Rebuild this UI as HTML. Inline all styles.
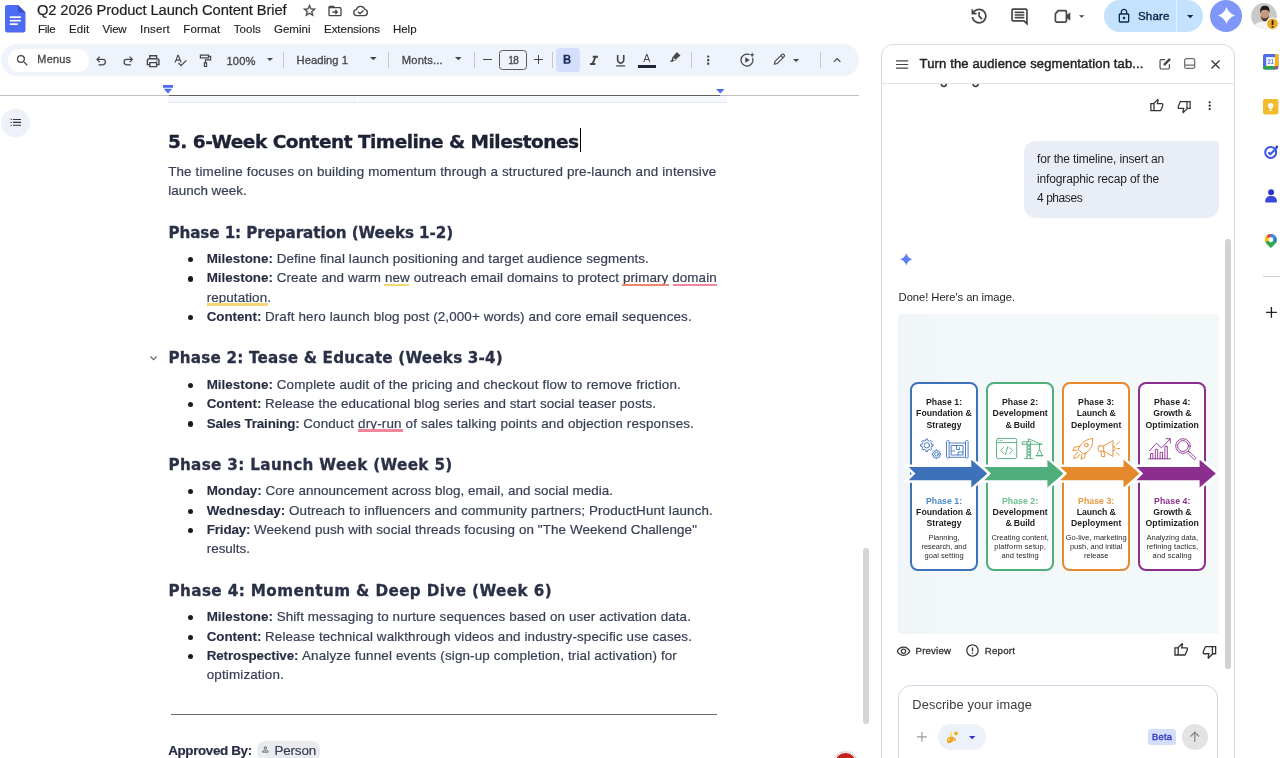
<!DOCTYPE html>
<html lang="en"><head><meta charset="utf-8"><title>Q2 2026 Product Launch Content Brief</title>
<style>
*{box-sizing:border-box;margin:0;padding:0}
html,body{width:1280px;height:758px;overflow:hidden;background:#fff}
body{position:relative;font-family:"Liberation Sans",sans-serif;color:#1f1f1f}
.a{position:absolute;white-space:nowrap}
.t{position:absolute;white-space:nowrap;line-height:1}
svg{position:absolute;overflow:visible}
.ic{fill:#444746}
.st{fill:none;stroke:#444746;stroke-width:1.6;stroke-linecap:round;stroke-linejoin:round}
.menu{font-size:11.5px;color:#1f1f1f;top:23.5px;-webkit-text-stroke:0.15px #1f1f1f}
.sep{position:absolute;width:1px;height:16px;top:52px;background:#c7c7c7}
.tb{font-size:11.2px;color:#444746;top:54.5px;-webkit-text-stroke:0.3px #444746}
.h1{font-family:"DejaVu Sans","Liberation Sans",sans-serif;font-weight:700;font-size:18.5px;color:#1d2235;left:168px;-webkit-text-stroke:0.35px #1d2235}
.h2{font-family:"DejaVu Sans","Liberation Sans",sans-serif;font-weight:700;font-size:15.2px;color:#2a3147;left:168px;-webkit-text-stroke:0.3px #2a3147}
.p{font-size:13.4px;color:#363e54;left:168px;-webkit-text-stroke:0.2px #363e54}
.li{font-size:13.4px;color:#363e54;left:206.5px;-webkit-text-stroke:0.2px #363e54}
.li b{color:#262d42;-webkit-text-stroke:0.1px #262d42}
.dot{position:absolute;left:188.1px;width:5.4px;height:5.4px;border-radius:50%;background:#1a1a1a}
.ul{position:absolute;height:2.4px}
#root{position:absolute;left:0;top:0;width:1280px;height:758px;overflow:hidden;will-change:transform}
</style></head><body><div id="root">
<!-- docs logo -->
<svg style="left:5px;top:4.5px" width="20.5" height="27.5" viewBox="0 0 20.5 27.5">
 <path d="M2.2 0H13l7.5 7.5V25.3a2.2 2.2 0 0 1-2.2 2.2H2.2A2.2 2.2 0 0 1 0 25.3V2.2A2.2 2.2 0 0 1 2.2 0z" fill="#4d6bf3"></path>
 <path d="M13 0l7.5 7.5H14.6A1.6 1.6 0 0 1 13 5.9z" fill="#3550c8"></path>
 <rect x="4.8" y="11.3" width="11" height="1.7" fill="#fff"></rect><rect x="4.8" y="14.8" width="11" height="1.7" fill="#fff"></rect><rect x="4.8" y="18.3" width="8" height="1.7" fill="#fff"></rect>
</svg>
<div class="t" style="left: 37px; font-size: 14.7px; color: rgb(31, 31, 31); -webkit-text-stroke: 0.2px rgb(31, 31, 31); letter-spacing: -0.101px; top: 2.9px;">Q2 2026 Product Launch Content Brief</div>
<!-- star -->
<svg style="left:301.7px;top:3.1px" width="15" height="15" viewBox="0 0 24 24"><path class="ic" style="stroke:#444746;stroke-width:.6" d="M22 9.24l-7.19-.62L12 2 9.19 8.63 2 9.24l5.46 4.73L5.82 21 12 17.27 18.18 21l-1.63-7.03L22 9.24zM12 15.4l-3.76 2.27 1-4.28-3.32-2.88 4.38-.38L12 6.1l1.71 4.04 4.38.38-3.32 2.88 1 4.28L12 15.4z"></path></svg>
<!-- move folder -->
<svg style="left:326.5px;top:2.5px" width="16" height="16" viewBox="0 0 24 24"><path class="st" style="stroke-width:2" d="M3 6.5A1.5 1.5 0 0 1 4.5 5H9.5L11.5 7H19.5A1.5 1.5 0 0 1 21 8.5V17.5A1.5 1.5 0 0 1 19.500 19H4.5A1.500 1.500 0 0 1 3 17.5Z M9 13.500H15.500 M13 11L15.500 13.500L13 16"></path><path class="ic" d="M3 6.500A1.500 1.500 0 0 1 4.500 5H9.500L11.800 8H3z"></path></svg>
<!-- cloud done -->
<svg style="left:352px;top:2.5px" width="17" height="16" viewBox="0 0 25.500 24"><path class="st" style="stroke-width:2" d="M7 19A4.500 4.500 0 0 1 6.500 10.050A6.500 6.500 0 0 1 19 9.500A4.800 4.800 0 0 1 19 19Z M9.500 13.500L12 16L16.500 11.500"></path></svg>
<div class="t menu" style="left: 38px; letter-spacing: -0.258px; top: 23.7px;">File</div>
<div class="t menu" style="left: 69px; letter-spacing: 0.118px; top: 23.7px;">Edit</div>
<div class="t menu" style="left: 102.5px; letter-spacing: -0.18px; top: 23.7px;">View</div>
<div class="t menu" style="left: 140px; letter-spacing: 0.206px; top: 23.7px;">Insert</div>
<div class="t menu" style="left: 183.3px; letter-spacing: 0.096px; top: 23.7px;">Format</div>
<div class="t menu" style="left: 233.8px; letter-spacing: 0.028px; top: 23.7px;">Tools</div>
<div class="t menu" style="left: 274px; letter-spacing: 0.01px; top: 23.7px;">Gemini</div>
<div class="t menu" style="left: 324px; letter-spacing: -0.027px; top: 23.7px;">Extensions</div>
<div class="t menu" style="left: 393px; letter-spacing: -0.039px; top: 23.7px;">Help</div>
<!-- history -->
<svg style="left:968.900px;top:5.600px" width="20.200" height="20.200" viewBox="0 0 24 24"><path class="ic" d="M12 21q-3.450 0-6.012-2.287Q3.425 16.425 3.050 13H5.100q.350 2.600 2.313 4.300Q9.375 19 12 19q2.925 0 4.963-2.037Q19 14.925 19 12t-2.037-4.963Q14.925 5 12 5q-1.725 0-3.225.800T6.250 8H9v2H3V4h2v2.350q1.275-1.600 3.113-2.475Q9.950 3 12 3q1.875 0 3.513.712 1.637.713 2.850 1.926 1.212 1.212 1.925 2.850Q21 10.125 21 12t-.712 3.513q-.713 1.637-1.925 2.850-1.213 1.212-2.850 1.925Q13.875 21 12 21Zm2.800-4.800L11 12.400V7h2v4.600l3.200 3.200Z"></path></svg>
<!-- comment -->
<svg style="left:1008.700px;top:5.700px" width="21" height="21" viewBox="0 0 24 24"><path class="st" style="stroke-width:1.900;stroke-linejoin:miter" d="M3.500 4.500A1 1 0 0 1 4.500 3.500H19.500A1 1 0 0 1 20.500 4.500V20.300L17.200 17H4.500A1 1 0 0 1 3.500 16Z"></path><path class="st" style="stroke-width:1.900;stroke-linecap:butt" d="M6.500 7.300H17.500M6.500 10.300H17.500M6.500 13.300H17.500"></path></svg>
<!-- videocam -->
<svg style="left:1052.400px;top:6.100px" width="20.400" height="20.400" viewBox="0 0 24 24"><path class="st" style="stroke-width:2" d="M7.300 5.500h8.200a1.500 1.500 0 0 1 1.500 1.500v10.500a1.500 1.500 0 0 1-1.500 1.500h-10a1.500 1.500 0 0 1-1.500-1.500V9.300z"></path><path class="ic" d="M17 10.800l4.500-3.500v10l-4.500-3.500z"></path></svg>
<svg style="left:1079.300px;top:14.500px" width="5.400" height="3" viewBox="0 0 10 5"><path class="ic" d="M0 0h10L5 5z"></path></svg>
<!-- share -->
<div class="a" style="left:1104px;top:0;width:98.500px;height:32px;border-radius:16px;background:#c4e2fd"></div>
<div class="a" style="left:1176px;top:0;width:1px;height:32px;background:#e9f3ff"></div>
<svg style="left:1116px;top:7.500px" width="16" height="16" viewBox="0 0 24 24"><path fill="#0b2b4a" d="M18 8h-1V6c0-2.760-2.240-5-5-5S7 3.240 7 6v2H6c-1.100 0-2 .900-2 2v10c0 1.100.900 2 2 2h12c1.100 0 2-.900 2-2V10c0-1.100-.900-2-2-2zM9 6c0-1.660 1.340-3 3-3s3 1.340 3 3v2H9V6zm9 14H6V10h12v10zm-6-3c1.100 0 2-.900 2-2s-.900-2-2-2-2 .900-2 2 .900 2 2 2z"></path></svg>
<div class="t" style="left: 1138px; font-size: 11.6px; -webkit-text-stroke: 0.4px rgb(11, 43, 74); color: rgb(11, 43, 74); letter-spacing: 0.113px; top: 10px;">Share</div>
<svg style="left:1186.800px;top:14.700px" width="6.400" height="3.400" viewBox="0 0 10 5"><path fill="#0b2b4a" d="M0 0h10L5 5z"></path></svg>
<!-- gemini -->
<div class="a" style="left:1210px;top:-0.200px;width:32px;height:32px;border-radius:50%;background:#7f97f9"></div>
<svg style="left:1217.500px;top:7.200px" width="17" height="17" viewBox="0 0 24 24"><path fill="#fff" d="M12 0C13.800 5.800 18.200 10.200 24 12C18.200 13.800 13.800 18.200 12 24C10.200 18.200 5.800 13.800 0 12C5.800 10.200 10.200 5.800 12 0Z"></path></svg>
<!-- avatar -->
<svg style="left:1251px;top:2.700px" width="28" height="28" viewBox="0 0 28 28">
 <defs><clipPath id="avc"><circle cx="13" cy="13" r="12.900"></circle></clipPath></defs>
 <g clip-path="url(#avc)"><rect width="26" height="26" fill="#c9c9c9"></rect>
 <path d="M2 27C3 20.500 7 18.500 13.500 18.500S23 20.500 24.500 27Z" fill="#f4f4f2"></path>
 <ellipse cx="13.800" cy="11.500" rx="4.300" ry="5.600" fill="#c79a7d"></ellipse>
 <path d="M9.300 10.500C8.500 4.500 11 2.800 14 2.800S19.200 4.500 18.300 10.200C17.800 7.800 16.500 6.800 13.800 6.800S10 7.800 9.300 10.500Z" fill="#1f1a18"></path>
 <path d="M9.800 12.500C10 16.500 12 18.300 13.800 18.300S17.700 16.500 17.900 12.500C17 15 15.500 15.300 13.800 15.300S10.600 15 9.800 12.500Z" fill="#4a3a32"></path>
 </g>
 <circle cx="21.500" cy="20.800" r="6.300" fill="#fff"></circle><circle cx="21.500" cy="20.800" r="5.400" fill="#e9a924"></circle>
 <rect x="20.700" y="17.200" width="1.700" height="4.800" fill="#2a2010"></rect><rect x="20.700" y="23" width="1.700" height="1.500" fill="#2a2010"></rect>
</svg>

<div class="a" style="left:1px;top:44.200px;width:858.200px;height:31.400px;border-radius:15.700px;background:#eff3fb"></div>
<div class="a" style="left:8px;top:49px;width:80.500px;height:22.500px;border-radius:11.250px;background:#fff"></div>
<svg style="left:14.500px;top:52.500px" width="15" height="15" viewBox="0 0 24 24"><path class="ic" d="M15.500 14h-.790l-.280-.270A6.471 6.471 0 0 0 16 9.500 6.500 6.500 0 1 0 9.500 16c1.610 0 3.090-.590 4.230-1.570l.270.280v.790l5 4.990L20.490 19l-4.990-5zm-6 0C7.010 14 5 11.990 5 9.500S7.010 5 9.500 5 14 7.010 14 9.500 11.990 14 9.500 14z"></path></svg>
<div class="t tb" style="left: 37.3px; font-size: 10.9px; letter-spacing: 0.259px; top: 53.7px;">Menus</div>
<!-- undo / redo -->
<svg style="left:94.300px;top:54.300px" width="14.400" height="14.400" viewBox="0 0 24 24"><path class="st" style="stroke-width:2;stroke-linecap:butt;stroke-linejoin:miter" d="M9.500 4.500L5 9l4.500 4.500M5.500 9h9a4.500 4.500 0 0 1 0 9H7.500"></path></svg>
<svg style="left:120.800px;top:54.300px" width="14.400" height="14.400" viewBox="0 0 24 24"><path class="st" style="stroke-width:2;stroke-linecap:butt;stroke-linejoin:miter" d="M14.500 4.500L19 9l-4.500 4.500M18.500 9h-9a4.500 4.500 0 0 0 0 9H16.500"></path></svg>
<!-- print -->
<svg style="left:145.400px;top:52.600px" width="16.400" height="16.400" viewBox="0 0 24 24"><path class="st" style="stroke-width:2;stroke-linejoin:miter" d="M7 8V4h10v4M7 17H3.500v-5.500a3 3 0 0 1 3-3h11a3 3 0 0 1 3 3V17H17M7 14h10v6H7z"></path><circle cx="17.500" cy="11.700" r="1" class="ic"></circle></svg>
<!-- spellcheck -->
<svg style="left:172.500px;top:52.500px" width="14.400" height="14.400" viewBox="0 0 24 24"><path class="ic" d="M12.450 16h2.090L9.430 3H7.570L2.460 16h2.090l1.120-3h5.640l1.140 3zm-6.020-5L8.500 5.480 10.570 11H6.430zm15.160.59l-8.090 8.090L9.830 16l-1.410 1.410 5.090 5.090L23 13l-1.410-1.410z"></path></svg>
<!-- paint -->
<svg style="left:197.600px;top:52.800px" width="14.400" height="14.400" viewBox="0 0 24 24"><path class="st" style="stroke-width:2;stroke-linejoin:miter;stroke-linecap:butt" d="M4 3.500h13.500v4.500H4zM17.500 5.500H21V11.500H12.500V16M10.700 16.500h3.600v6h-3.600z"></path></svg>
<div class="t tb" style="left: 226.6px; letter-spacing: 0.044px; top: 55.5px;">100%</div>
<svg style="left:266.500px;top:58.400px" width="6" height="3.200" viewBox="0 0 10 5"><path class="ic" d="M0 0h10L5 5z"></path></svg>
<div class="sep" style="left:283px"></div>
<div class="t tb" style="left: 296.5px; letter-spacing: 0.054px; top: 54.7px;">Heading 1</div>
<svg style="left:370.300px;top:57.400px" width="6.600" height="3.300" viewBox="0 0 10 5"><path class="ic" d="M0 0h10L5 5z"></path></svg>
<div class="sep" style="left:388px"></div>
<div class="t tb" style="left: 401.8px; letter-spacing: 0.15px; top: 54.7px;">Monts...</div>
<svg style="left:455px;top:57.400px" width="6.600" height="3.300" viewBox="0 0 10 5"><path class="ic" d="M0 0h10L5 5z"></path></svg>
<div class="sep" style="left:474px"></div>
<div class="a" style="left:482.800px;top:59px;width:8.800px;height:1.100px;background:#444746"></div>
<div class="a" style="left:499px;top:50.100px;width:27.600px;height:19.600px;border:1px solid #5a5d5c;border-radius:3.500px"></div>
<div class="t tb" style="left: 508.3px; font-size: 10px; letter-spacing: -0.662px; top: 55.6px;">18</div>
<div class="a" style="left:534.400px;top:59px;width:8.600px;height:1.100px;background:#444746"></div>
<div class="a" style="left:538.150px;top:55.250px;width:1.100px;height:8.600px;background:#444746"></div>
<div class="sep" style="left:552px"></div>
<div class="a" style="left:556.200px;top:48px;width:23.800px;height:23.700px;border-radius:3.500px;background:#d4e0fb"></div>
<svg style="left:559.450px;top:52.400px" width="15.800" height="15.800" viewBox="0 0 24 24"><path fill="#1b2a5c" d="M15.600 10.790c.970-.670 1.650-1.770 1.650-2.790 0-2.260-1.750-4-4-4H7v14h7.040c2.090 0 3.710-1.700 3.710-3.790 0-1.520-.860-2.820-2.150-3.420zM10 6.500h3c.830 0 1.500.670 1.500 1.500s-.670 1.500-1.500 1.500h-3v-3zm3.500 9H10v-3h3.500c.830 0 1.500.670 1.500 1.500s-.670 1.500-1.500 1.500z"></path></svg>
<svg style="left:586px;top:52.600px" width="16" height="16" viewBox="0 0 24 24"><path class="ic" d="M10 4v3h2.210l-3.420 8H6v3h8v-3h-2.210l3.420-8H18V4z"></path></svg>
<svg style="left:612.800px;top:52.900px" width="15.400" height="15.400" viewBox="0 0 24 24"><path class="ic" d="M12 17c3.310 0 6-2.690 6-6V3h-2.500v8c0 1.930-1.570 3.500-3.500 3.500S8.500 12.930 8.500 11V3H6v8c0 3.310 2.690 6 6 6zm-7 2v2h14v-2H5z"></path></svg>
<div class="t" style="left: 643.2px; font-size: 10.6px; color: rgb(68, 71, 70); top: 53.1px;">A</div>
<div class="a" style="left:638px;top:65px;width:18px;height:2.800px;background:#1f2438"></div>
<!-- highlighter -->
<svg style="left:667.800px;top:50.400px" width="14.400" height="14.400" viewBox="0 0 24 24"><path class="ic" d="M14.800 3.200l6 6-8.600 8.600-3.200.6-1 1H3l3.200-3.200.6-3.200zM9 13.500l-.4 2 1.900 1.900 2-.4 6-6-3.500-3.500z"></path><path class="ic" d="M8.800 12.600l6.200-6.200 3.600 3.600-6.200 6.200z"></path></svg>
<div class="sep" style="left:691.200px"></div>
<svg style="left:700.500px;top:53px" width="14.400" height="14.400" viewBox="0 0 24 24"><path class="ic" d="M12 8c1.100 0 2-.9 2-2s-.9-2-2-2-2 .9-2 2 .9 2 2 2zm0 2c-1.100 0-2 .9-2 2s.9 2 2 2 2-.9 2-2-.9-2-2-2zm0 6c-1.100 0-2 .9-2 2s.9 2 2 2 2-.9 2-2-.9-2-2-2z"></path></svg>
<!-- circle play + sparkle -->
<svg style="left:738.500px;top:51.500px" width="16" height="16" viewBox="0 0 24 24"><path class="st" style="stroke-width:1.900" d="M15 3.600A9 9 0 1 0 20.600 9.500"></path><path class="ic" d="M9.500 8v8l6.500-4z"></path><path class="ic" d="M19.700 0l1.100 3.200 3.200 1.100-3.200 1.100-1.100 3.200-1.100-3.200-3.200-1.100 3.200-1.100z"></path></svg>
<!-- pencil -->
<svg style="left:772.400px;top:52.300px" width="14.400" height="14.400" viewBox="0 0 24 24"><path class="st" style="stroke-width:1.900" d="M4 20.500l1-4.800L16.700 4a1.900 1.900 0 0 1 2.700 0l.9.900a1.900 1.900 0 0 1 0 2.700L8.600 19.300zM14.800 6l3.500 3.500"></path></svg>
<svg style="left:792.800px;top:58.900px" width="6.200" height="3.100" viewBox="0 0 10 5"><path class="ic" d="M0 0h10L5 5z"></path></svg>
<div class="sep" style="left:820.200px"></div>
<svg style="left:829.700px;top:53.400px" width="14.400" height="14.400" viewBox="0 0 24 24"><path class="ic" d="M12 8l-6 6 1.410 1.410L12 10.830l4.590 4.580L18 14z"></path></svg>

<div class="a" style="left:0;top:95px;width:859px;height:1px;background:#bdbdbd"></div>
<div class="a" style="left:168.500px;top:94.800px;width:551.500px;height:1.300px;background:#5f6060"></div>
<svg style="left:163px;top:85px" width="10" height="9" viewBox="0 0 10 9"><path fill="#4f6bf0" d="M0 0h10v2.700H0zM0.800 3.800h8.400L5 8.400z"></path></svg>
<svg style="left:716px;top:89px" width="9" height="5" viewBox="0 0 9 5"><path fill="#4f6bf0" d="M0 0h8.600L4.300 4.400z"></path></svg>
<div class="a" style="left:168px;top:96.300px;width:559px;height:6.500px;background:#f7f9fc;border-bottom:1px solid #e1e6f2"></div>
<div class="a" style="left:354px;top:96.300px;width:1px;height:6px;background:#eceff7"></div>
<div class="a" style="left:1.300px;top:108.700px;width:28.800px;height:28.800px;border-radius:50%;background:#eef1f9"></div>
<svg style="left:9.200px;top:116.200px" width="12.800" height="12.800" viewBox="0 0 24 24"><path fill="#333" d="M4 10.800c-.700 0-1.200.500-1.200 1.200s.500 1.200 1.200 1.200 1.200-.500 1.200-1.200-.500-1.200-1.200-1.200zm0-5.500c-.700 0-1.200.500-1.200 1.200S3.300 7.700 4 7.700 5.200 7.200 5.200 6.500 4.700 5.300 4 5.300zm0 11c-.700 0-1.200.500-1.200 1.200s.500 1.200 1.200 1.200 1.200-.500 1.200-1.200-.500-1.200-1.200-1.200zM7.500 18.500h15v-2h-15v2zm0-5.500h15v-2h-15v2zm0-7.500v2h15v-2h-15z"></path></svg>
<div class="t h1" style="letter-spacing: -0.502px; top: 132.5px;">5. 6-Week Content Timeline &amp; Milestones</div>
<div class="a" style="left:579.600px;top:128.300px;width:1px;height:23.700px;background:#000"></div>
<div class="t p" style="left: 168.2px; letter-spacing: 0.15px; top: 164.9px;">The timeline focuses on building momentum through a structured pre-launch and intensive</div>
<div class="t p" style="left: 168.2px; letter-spacing: 0.036px; top: 184.1px;">launch week.</div>
<div class="t h2" style="left: 168.5px; letter-spacing: -0.112px; top: 225.6px;">Phase 1: Preparation (Weeks 1-2)</div>
<div class="dot" style="top:256.9px"></div>
<div class="t li" style="left: 206.7px; top: 252px;"><b style="letter-spacing: 0.006px;">Milestone: </b><span style="letter-spacing: 0.11px;">Define final launch positioning and target audience segments.</span></div>
<div class="dot" style="top:276.2px"></div>
<div class="t li" style="left: 206.7px; top: 271.3px;"><b style="letter-spacing: 0.006px;">Milestone: </b><span style="letter-spacing: 0.113px;">Create and warm new outreach email domains to protect primary domain</span></div>
<div class="t li" style="left: 206.7px; letter-spacing: 0.093px; top: 290.5px;">reputation.</div>
<div class="dot" style="top:314.7px"></div>
<div class="t li" style="left: 206.7px; top: 309.8px;"><b style="letter-spacing: -0.052px;">Content: </b><span style="letter-spacing: 0.13px;">Draft hero launch blog post (2,000+ words) and core email sequences.</span></div>
<div class="t h2" style="left: 168.5px; letter-spacing: 0.194px; top: 351.3px;">Phase 2: Tease &amp; Educate (Weeks 3-4)</div>
<div class="dot" style="top:382.9px"></div>
<div class="t li" style="left: 206.7px; top: 378px;"><b style="letter-spacing: 0.006px;">Milestone: </b><span style="letter-spacing: 0.191px;">Complete audit of the pricing and checkout flow to remove friction.</span></div>
<div class="dot" style="top:402.1px"></div>
<div class="t li" style="left: 206.7px; top: 397.2px;"><b style="letter-spacing: -0.052px;">Content: </b><span style="letter-spacing: 0.071px;">Release the educational blog series and start social teaser posts.</span></div>
<div class="dot" style="top:421.4px"></div>
<div class="t li" style="left: 206.7px; top: 416.5px;"><b style="letter-spacing: -0.155px;">Sales Training: </b><span style="letter-spacing: 0.163px;">Conduct dry-run of sales talking points and objection responses.</span></div>
<div class="t h2" style="left: 168.5px; letter-spacing: 0.34px; top: 457.6px;">Phase 3: Launch Week (Week 5)</div>
<div class="dot" style="top:488.8px"></div>
<div class="t li" style="left: 206.7px; top: 483.9px;"><b style="letter-spacing: 0.002px;">Monday: </b><span style="letter-spacing: 0.052px;">Core announcement across blog, email, and social media.</span></div>
<div class="dot" style="top:508.5px"></div>
<div class="t li" style="left: 206.7px; top: 503.6px;"><b style="letter-spacing: -0.005px;">Wednesday: </b><span style="letter-spacing: 0.14px;">Outreach to influencers and community partners; ProductHunt launch.</span></div>
<div class="dot" style="top:527.9px"></div>
<div class="t li" style="left: 206.7px; top: 523px;"><b style="letter-spacing: -0.134px;">Friday: </b><span style="letter-spacing: 0.11px;">Weekend push with social threads focusing on "The Weekend Challenge"</span></div>
<div class="t li" style="left: 206.7px; letter-spacing: 0.016px; top: 542.2px;">results.</div>
<div class="t h2" style="left: 168.5px; letter-spacing: 0.4px; top: 583.8px;">Phase 4: Momentum &amp; Deep Dive (Week 6)</div>
<div class="dot" style="top:614.8px"></div>
<div class="t li" style="left: 206.7px; top: 609.9px;"><b style="letter-spacing: 0.006px;">Milestone: </b><span style="letter-spacing: 0.106px;">Shift messaging to nurture sequences based on user activation data.</span></div>
<div class="dot" style="top:634.7px"></div>
<div class="t li" style="left: 206.7px; top: 629.8px;"><b style="letter-spacing: -0.052px;">Content: </b><span style="letter-spacing: 0.137px;">Release technical walkthrough videos and industry-specific use cases.</span></div>
<div class="dot" style="top:653.9px"></div>
<div class="t li" style="left: 206.7px; top: 649px;"><b style="letter-spacing: -0.097px;">Retrospective: </b><span style="letter-spacing: 0.161px;">Analyze funnel events (sign-up completion, trial activation) for</span></div>
<div class="t li" style="left: 206.7px; letter-spacing: 0.162px; top: 667.9px;">optimization.</div>
<svg style="left:149.500px;top:355.700px" width="7" height="4.500" viewBox="0 0 7 4.500"><path d="M0.500 0.500L3.500 3.700L6.500 0.500" fill="none" stroke="#5f6368" stroke-width="1.100"></path></svg>
<div class="ul" style="left:383.500px;top:284.000px;width:25.500px;background:#f4d774"></div>
<div class="ul" style="left:206.500px;top:303.200px;width:61.500px;background:#f4d774"></div>
<div class="ul" style="left:622.200px;top:284.000px;width:46.600px;background:#f0866a"></div>
<div class="ul" style="left:672.500px;top:284.000px;width:44.500px;background:#f0869c"></div>
<div class="ul" style="left:358px;top:429.200px;width:45px;background:#f0869c"></div>
<div class="a" style="left:171px;top:713.800px;width:546px;height:1px;background:#6e6e6e"></div>
<div class="t li" style="left: 168.2px; font-weight: 700; color: rgb(38, 45, 66); letter-spacing: -0.35px; top: 743.6px;">Approved By:</div>
<div class="a" style="left:256.700px;top:741.200px;width:63.500px;height:20px;border-radius:8px;background:#e9ebef"></div>
<svg style="left:262.300px;top:745.800px" width="6.800" height="6.800" viewBox="0 0 12 12"><circle cx="6" cy="3.200" r="2" fill="none" stroke="#3a3f4d" stroke-width="1.400"></circle><path d="M1 10.800c0-2.200 2.200-3.400 5-3.400s5 1.200 5 3.400z" fill="none" stroke="#3a3f4d" stroke-width="1.400"></path></svg>
<div class="t li" style="left: 274.5px; letter-spacing: -0.156px; top: 743.6px;">Person</div>
<div class="a" style="left:863px;top:548.300px;width:6px;height:175.500px;border-radius:3px;background:#d5d5d5"></div>
<div class="a" style="left:833.500px;top:751.500px;width:23px;height:23px;border-radius:50%;background:#c5221f;border:1.500px solid #fff;box-shadow:0 0 2px rgba(0,0,0,.45)"></div>

<div class="a" style="left:881px;top:44px;width:354px;height:730px;border:1px solid #d8dadb;border-radius:12px 12px 0 0;background:#fff"></div>
<div class="a" style="left:882px;top:83px;width:352px;height:1px;background:#e0e2e4"></div>
<svg style="left:896px;top:59.500px" width="12.200" height="9" viewBox="0 0 12.200 9"><path d="M0 0.800H12.200M0 4.500H12.200M0 8.200H12.200" stroke="#444746" stroke-width="1.250" fill="none"></path></svg>
<div class="t" style="left: 919.6px; font-size: 13px; font-weight: 400; -webkit-text-stroke: 0.45px rgb(36, 36, 36); color: rgb(36, 36, 36); letter-spacing: 0.149px; top: 57.1px;">Turn the audience segmentation tab...</div>
<svg style="left:1157.600px;top:57.200px" width="14" height="14" viewBox="0 0 24 24"><path class="st" style="stroke-width:2" d="M11 4.500H5.500a2 2 0 0 0-2 2v12a2 2 0 0 0 2 2h12a2 2 0 0 0 2-2V13"></path><path class="ic" d="M9.500 14.500v-3L18.300 2.700a1.200 1.200 0 0 1 1.700 0l1.300 1.300a1.200 1.200 0 0 1 0 1.700L12.500 14.500z"></path></svg>
<svg style="left:1184.400px;top:58.400px" width="11.400" height="11.200" viewBox="0 0 11.400 11.200"><path d="M0.700 2.200a1.500 1.500 0 0 1 1.500-1.500h7a1.500 1.500 0 0 1 1.500 1.500v6.800a1.500 1.500 0 0 1-1.500 1.500h-7a1.500 1.500 0 0 1-1.500-1.500zM0.700 7.200h10" fill="none" stroke="#6b6e6d" stroke-width="1.250"></path></svg>
<svg style="left:1210.500px;top:59.900px" width="9" height="9" viewBox="0 0 9 9"><path d="M0.500 0.500L8.500 8.500M8.500 0.500L0.500 8.500" stroke="#333" stroke-width="1.300" fill="none"></path></svg>
<svg style="left:940px;top:83.500px" width="40" height="4" viewBox="0 0 40 4"><path d="M1.300 0c0.300 3.300 4.800 3.300 5.100 0M33.100 0c0.300 3.300 4.800 3.300 5.100 0" fill="none" stroke="#333" stroke-width="1.500"></path></svg>
<svg style="left:1148.5px;top:97.7px" width="15" height="15" viewBox="0 0 24 24"><path fill="#333" d="M18 21H7V8l7-7 1.250 1.250q.175.175.288.475.112.300.112.575v.350L14.550 8H21q.800 0 1.400.600.600.600.600 1.400v2q0 .175-.050.375t-.100.375l-3 7.050q-.225.500-.750.850T18 21Zm-9-2h9l3-7v-2h-9l1.350-5.500L9 8.850ZM9 8.850V19ZM7 8v2H4v9h3v2H2V8Z"></path></svg>
<svg style="left:1176.5px;top:99.3px" width="15" height="15" viewBox="0 0 24 24"><path fill="#333" d="M6 3h11v13l-7 7-1.250-1.250q-.175-.175-.287-.475Q8.350 20.975 8.350 20.700v-.350L9.450 16H3q-.800 0-1.400-.600Q1 14.800 1 14v-2q0-.175.050-.375t.100-.375l3-7.050q.225-.500.750-.850T6 3Zm9 2H6l-3 7v2h9l-1.350 5.500L15 15.150Zm0 10.150V5Zm2 .850v-2h3V5h-3V3h5v13Z"></path></svg>
<svg style="left:1203.300px;top:99.400px" width="13.400" height="13.400" viewBox="0 0 24 24"><path fill="#333" d="M12 8c1.100 0 2-.900 2-2s-.900-2-2-2-2 .900-2 2 .900 2 2 2zm0 2c-1.100 0-2 .900-2 2s.900 2 2 2 2-.900 2-2-.900-2-2-2zm0 6c-1.100 0-2 .900-2 2s.900 2 2 2 2-.900 2-2-.900-2-2-2z"></path></svg>
<div class="a" style="left:1024px;top:140.800px;width:195px;height:77.200px;border-radius:12px 3px 12px 12px;background:#e9edf6"></div>
<div class="t" style="left: 1037px; font-size: 12px; color: rgb(31, 31, 31); letter-spacing: -0.163px; top: 152.9px;">for the timeline, insert an</div>
<div class="t" style="left: 1037px; font-size: 12px; color: rgb(31, 31, 31); letter-spacing: -0.138px; top: 173px;">infographic recap of the</div>
<div class="t" style="left: 1037px; font-size: 12px; color: rgb(31, 31, 31); letter-spacing: -0.438px; top: 191.9px;">4 phases</div>
<svg style="left:899.700px;top:252.700px" width="12.600" height="12.600" viewBox="0 0 24 24"><defs><linearGradient id="spk" x1="0" y1="1" x2="1" y2="0"><stop offset="0" stop-color="#4f6df5"></stop><stop offset="1" stop-color="#6f8ff8"></stop></linearGradient></defs><path fill="url(#spk)" d="M12 0C13.400 6 18 10.600 24 12C18 13.400 13.400 18 12 24C10.600 18 6 13.400 0 12C6 10.600 10.600 6 12 0Z"></path></svg>
<div class="t" style="left: 898.6px; font-size: 11.2px; color: rgb(31, 31, 31); letter-spacing: -0.036px; top: 291.9px;">Done! Here's an image.</div>
<div class="a" style="left:898px;top:314px;width:321px;height:319.500px;border-radius:2.5px;background:linear-gradient(90deg,#eff4f8 0,#f2f7f9 12%,#f3f8f9 100%);overflow:hidden"><div class="a" style="left:12.0px;top:67.6px;width:68px;height:189.600px;border:2px solid #3d72bb;border-radius:8px;background:#fff"></div>
<div class="a" style="left:88.1px;top:67.6px;width:68px;height:189.600px;border:2px solid #4fae7b;border-radius:8px;background:#fff"></div>
<div class="a" style="left:164.2px;top:67.6px;width:68px;height:189.600px;border:2px solid #e48a2c;border-radius:8px;background:#fff"></div>
<div class="a" style="left:240.3px;top:67.6px;width:68px;height:189.600px;border:2px solid #8b2e8e;border-radius:8px;background:#fff"></div>
<svg style="left:0;top:0" width="321" height="320" viewBox="898 314 321 320">
<path d="M908.6 467H971.3V459.800L987.6 473.600L971.3 487.400V480.200H908.6L915.4 473.600Z" fill="#3d72bb" stroke="#fff" stroke-width="5" stroke-linejoin="miter" paint-order="stroke"></path>
<path d="M984.2 467H1047.4V459.800L1063.7 473.600L1047.4 487.400V480.200H984.2L991.0 473.600Z" fill="#4fae7b" stroke="#fff" stroke-width="5" stroke-linejoin="miter" paint-order="stroke"></path>
<path d="M1060.3 467H1123.5V459.800L1139.8 473.600L1123.5 487.400V480.200H1060.3L1067.1 473.600Z" fill="#e48a2c" stroke="#fff" stroke-width="5" stroke-linejoin="miter" paint-order="stroke"></path>
<path d="M1136.4 467H1199.6V459.800L1215.9 473.600L1199.6 487.400V480.200H1136.4L1143.2 473.600Z" fill="#8b2e8e" stroke="#fff" stroke-width="5" stroke-linejoin="miter" paint-order="stroke"></path>
<g fill="none" stroke="#3d72bb" stroke-width="0.900" stroke-linecap="round" stroke-linejoin="round"><path d="M933.05 444.48L933.05 446.12L931.63 446.20L930.85 448.08L931.79 449.14L930.64 450.29L929.58 449.35L927.70 450.13L927.62 451.55L925.98 451.55L925.90 450.13L924.02 449.35L922.96 450.29L921.81 449.14L922.75 448.08L921.97 446.20L920.55 446.12L920.55 444.48L921.97 444.40L922.75 442.52L921.81 441.46L922.96 440.31L924.02 441.25L925.90 440.47L925.98 439.05L927.62 439.05L927.70 440.47L929.58 441.25L930.64 440.31L931.79 441.46L930.85 442.52L931.63 444.40Z"></path><circle cx="926.8" cy="445.3" r="2.65"></circle><path d="M940.76 453.63L940.76 454.77L939.77 454.83L939.23 456.14L939.89 456.88L939.08 457.69L938.34 457.03L937.03 457.57L936.97 458.56L935.83 458.56L935.77 457.57L934.46 457.03L933.72 457.69L932.91 456.88L933.57 456.14L933.03 454.83L932.04 454.77L932.04 453.63L933.03 453.57L933.57 452.26L932.91 451.52L933.72 450.71L934.46 451.37L935.77 450.83L935.83 449.84L936.97 449.84L937.03 450.83L938.34 451.37L939.08 450.71L939.89 451.52L939.23 452.26L939.77 453.57Z"></path><circle cx="936.4" cy="454.2" r="1.85"></circle><path d="M946.500 441.500c0-1.600 2.600-1.600 2.600 0v15.500c0 1.600-2.600 1.600-2.600 0zM949.100 443h16.400M949.100 457.300h16.400M965.500 441.500c0-1.600 2.600-1.600 2.600 0v15.500c0 1.600-2.600 1.600-2.600 0z"></path><path d="M951.500 445.500h11.500v9.500h-11.500zM956.500 445.500v4h3v-2M951.500 451h3M958 455v-3h5"></path></g>
<g fill="none" stroke="#4fae7b" stroke-width="0.900" stroke-linecap="round" stroke-linejoin="round"><rect x="996.500" y="438.400" width="20.200" height="20.200" rx="1.800"></rect><path d="M996.500 442.600h20.200M998.600 440.500h0.100M1000.400 440.500h0.100M1002.200 440.500h0.100"></path><path d="M1003.500 447.500l-2.800 3 2.800 3M1009.700 447.500l2.800 3-2.800 3M1007.800 446.600l-2.400 7.800"></path><path d="M1027 458.500v-17h3.400v17M1027 444.500l3.400 3-3.400 3 3.400 3-3.400 3M1030.400 444.500l-3.400 3 3.400 3-3.400 3 3.400 3M1024.500 458.600h8.400M1022.300 444.300h20M1022.300 444.300v-2.500h5M1028.700 441.300l-0.500-2.600 12.500 5.300M1039.500 444.300v5.200M1036.500 455.500l3-5.800 3 5.800zM1036 455.600h7"></path></g>
<g fill="none" stroke="#e48a2c" stroke-width="0.900" stroke-linecap="round" stroke-linejoin="round"><path d="M1092.500 438.600c-6.500 0.300-11.800 4.500-14.200 10.600l5 5c6.100-2.400 10.300-7.700 9.200-15.600z"></path><circle cx="1086.300" cy="445" r="1.900"></circle><path d="M1079.800 446.300l-5.300 0.800-1.600 3.600 4.500-0.700M1085.500 452.700l-0.800 5-3.600 1.600 0.700-4.500M1078 452.200c-2.200 0.800-3.600 3.400-4.400 6.400 3-0.800 5.600-2.200 6.400-4.400"></path><path d="M1099.500 445.800h4.200l9.300-5.200v15.800l-9.300-5.200h-4.200a1.400 1.400 0 0 1-1.400-1.400v-2.600a1.400 1.400 0 0 1 1.400-1.400zM1103.700 445.800v5.400M1100.800 451.200l1 5.300h3l-0.900-5.300M1113 446.200a2.300 2.300 0 0 1 0 4.600"></path><path d="M1116.500 444.500l2.800-2.500M1117.200 448.500h2.600M1116.500 452.500l2.800 2.500"></path></g>
<g fill="none" stroke="#8b2e8e" stroke-width="0.900" stroke-linecap="round" stroke-linejoin="round"><path d="M1148.600 458.800h22M1150.500 458.800v-5.300h2.400v5.300M1155.300 458.800v-9.500h2.400v9.500M1160.100 458.800v-6.500h2.400v6.500M1164.900 458.800v-12.500h2.400v12.500"></path><path d="M1149.500 450.800l7-7.500 5 4.500 8.500-8.800M1166 438.700h4.300v4.300"></path><circle cx="1183" cy="446" r="7.300"></circle><circle cx="1183" cy="446" r="5.400"></circle><path d="M1188.300 451.300l1.300 1.300M1189.300 451.600l6 6a1.100 1.100 0 0 1-1.600 1.600l-6-6"></path></g>
</svg>
<div class="t" style="left: 28px; font-size: 8.7px; font-weight: 700; color: rgb(28, 28, 28); letter-spacing: 0.046px; top: 83.8px;">Phase 1:</div>
<div class="t" style="left: 18.1px; font-size: 8.7px; font-weight: 700; color: rgb(28, 28, 28); letter-spacing: -0.024px; top: 95.3px;">Foundation &amp;</div>
<div class="t" style="left: 28.5px; font-size: 8.7px; font-weight: 700; color: rgb(28, 28, 28); letter-spacing: 0.029px; top: 106.6px;">Strategy</div>
<div class="t" style="left: 28px; font-size: 8.7px; font-weight: 700; color: rgb(75, 137, 200); letter-spacing: 0.046px; top: 182.7px;">Phase 1:</div>
<div class="t" style="left: 18.1px; font-size: 8.7px; font-weight: 700; color: rgb(28, 28, 28); letter-spacing: -0.024px; top: 193.8px;">Foundation &amp;</div>
<div class="t" style="left: 28.5px; font-size: 8.7px; font-weight: 700; color: rgb(28, 28, 28); letter-spacing: 0.029px; top: 204.9px;">Strategy</div>
<div class="t" style="left: 30.5px; font-size: 7.5px; font-weight: 400; color: rgb(42, 42, 42); letter-spacing: -0.042px; top: 219.8px;">Planning,</div>
<div class="t" style="left: 23.5px; font-size: 7.5px; font-weight: 400; color: rgb(42, 42, 42); letter-spacing: -0.06px; top: 228.8px;">research, and</div>
<div class="t" style="left: 26.4px; font-size: 7.5px; font-weight: 400; color: rgb(42, 42, 42); letter-spacing: 0.077px; top: 237.9px;">goal setting</div>
<div class="t" style="left: 104px; font-size: 8.7px; font-weight: 700; color: rgb(28, 28, 28); letter-spacing: 0.058px; top: 83.8px;">Phase 2:</div>
<div class="t" style="left: 94.6px; font-size: 8.7px; font-weight: 700; color: rgb(28, 28, 28); letter-spacing: 0.049px; top: 95.3px;">Development</div>
<div class="t" style="left: 107.4px; font-size: 8.7px; font-weight: 700; color: rgb(28, 28, 28); letter-spacing: -0.129px; top: 106.6px;">&amp; Build</div>
<div class="t" style="left: 104px; font-size: 8.7px; font-weight: 700; color: rgb(108, 191, 144); letter-spacing: 0.058px; top: 182.7px;">Phase 2:</div>
<div class="t" style="left: 94.6px; font-size: 8.7px; font-weight: 700; color: rgb(28, 28, 28); letter-spacing: 0.049px; top: 193.8px;">Development</div>
<div class="t" style="left: 107.4px; font-size: 8.7px; font-weight: 700; color: rgb(28, 28, 28); letter-spacing: -0.129px; top: 204.9px;">&amp; Build</div>
<div class="t" style="left: 93.4px; font-size: 7.5px; font-weight: 400; color: rgb(42, 42, 42); letter-spacing: 0.022px; top: 219.8px;">Creating content,</div>
<div class="t" style="left: 96.2px; font-size: 7.5px; font-weight: 400; color: rgb(42, 42, 42); letter-spacing: 0.146px; top: 228.8px;">platform setup,</div>
<div class="t" style="left: 103.4px; font-size: 7.5px; font-weight: 400; color: rgb(42, 42, 42); letter-spacing: 0.063px; top: 237.9px;">and testing</div>
<div class="t" style="left: 180.1px; font-size: 8.7px; font-weight: 700; color: rgb(28, 28, 28); letter-spacing: 0.058px; top: 83.8px;">Phase 3:</div>
<div class="t" style="left: 178.8px; font-size: 8.7px; font-weight: 700; color: rgb(28, 28, 28); letter-spacing: -0.097px; top: 95.3px;">Launch &amp;</div>
<div class="t" style="left: 173px; font-size: 8.7px; font-weight: 700; color: rgb(28, 28, 28); letter-spacing: 0.067px; top: 106.6px;">Deployment</div>
<div class="t" style="left: 180.1px; font-size: 8.7px; font-weight: 700; color: rgb(230, 154, 60); letter-spacing: 0.058px; top: 182.7px;">Phase 3:</div>
<div class="t" style="left: 178.8px; font-size: 8.7px; font-weight: 700; color: rgb(28, 28, 28); letter-spacing: -0.097px; top: 193.8px;">Launch &amp;</div>
<div class="t" style="left: 173px; font-size: 8.7px; font-weight: 700; color: rgb(28, 28, 28); letter-spacing: 0.067px; top: 204.9px;">Deployment</div>
<div class="t" style="left: 167.7px; font-size: 7.5px; font-weight: 400; color: rgb(42, 42, 42); letter-spacing: 0.008px; top: 219.8px;">Go-live, marketing</div>
<div class="t" style="left: 171.9px; font-size: 7.5px; font-weight: 400; color: rgb(42, 42, 42); letter-spacing: 0.028px; top: 228.8px;">push, and initial</div>
<div class="t" style="left: 186px; font-size: 7.5px; font-weight: 400; color: rgb(42, 42, 42); letter-spacing: -0.03px; top: 237.9px;">release</div>
<div class="t" style="left: 256.1px; font-size: 8.7px; font-weight: 700; color: rgb(28, 28, 28); letter-spacing: 0.071px; top: 83.8px;">Phase 4:</div>
<div class="t" style="left: 255.3px; font-size: 8.7px; font-weight: 700; color: rgb(28, 28, 28); letter-spacing: -0.137px; top: 95.3px;">Growth &amp;</div>
<div class="t" style="left: 247.5px; font-size: 8.7px; font-weight: 700; color: rgb(28, 28, 28); letter-spacing: 0.074px; top: 106.6px;">Optimization</div>
<div class="t" style="left: 256.1px; font-size: 8.7px; font-weight: 700; color: rgb(139, 46, 142); letter-spacing: 0.071px; top: 182.7px;">Phase 4:</div>
<div class="t" style="left: 255.3px; font-size: 8.7px; font-weight: 700; color: rgb(28, 28, 28); letter-spacing: -0.137px; top: 193.8px;">Growth &amp;</div>
<div class="t" style="left: 247.5px; font-size: 8.7px; font-weight: 700; color: rgb(28, 28, 28); letter-spacing: 0.074px; top: 204.9px;">Optimization</div>
<div class="t" style="left: 248.4px; font-size: 7.5px; font-weight: 400; color: rgb(42, 42, 42); letter-spacing: 0.034px; top: 219.8px;">Analyzing data,</div>
<div class="t" style="left: 248.4px; font-size: 7.5px; font-weight: 400; color: rgb(42, 42, 42); letter-spacing: 0.104px; top: 228.8px;">refining tactics,</div>
<div class="t" style="left: 254.6px; font-size: 7.5px; font-weight: 400; color: rgb(42, 42, 42); letter-spacing: 0.122px; top: 237.9px;">and scaling</div>
</div>
<svg style="left:895.700px;top:643.500px" width="15" height="15" viewBox="0 0 24 24"><path fill="#333" d="M12 6c3.790 0 7.170 2.130 8.820 5.500C19.170 14.870 15.790 17 12 17s-7.170-2.130-8.820-5.500C4.830 8.130 8.210 6 12 6m0-2C7 4 2.730 7.110 1 11.500 2.730 15.890 7 19 12 19s9.270-3.110 11-7.500C21.270 7.110 17 4 12 4zm0 5c1.380 0 2.500 1.120 2.500 2.500S13.380 14 12 14s-2.500-1.120-2.500-2.500S10.620 9 12 9m0-2c-2.480 0-4.500 2.020-4.500 4.500S9.520 16 12 16s4.500-2.020 4.500-4.500S14.480 7 12 7z"></path></svg>
<div class="t" style="left: 915.5px; font-size: 9.7px; -webkit-text-stroke: 0.3px rgb(51, 51, 51); color: rgb(51, 51, 51); letter-spacing: 0.176px; top: 646.1px;">Preview</div>
<svg style="left:964.500px;top:643.400px" width="15" height="15" viewBox="0 0 24 24"><path fill="#333" d="M11 15h2v2h-2zm0-8h2v6h-2zm.990-5C6.470 2 2 6.480 2 12s4.470 10 9.990 10C17.520 22 22 17.520 22 12S17.520 2 11.990 2zM12 20c-4.420 0-8-3.580-8-8s3.580-8 8-8 8 3.580 8 8-3.580 8-8 8z"></path></svg>
<div class="t" style="left: 984.7px; font-size: 9.7px; -webkit-text-stroke: 0.3px rgb(51, 51, 51); color: rgb(51, 51, 51); letter-spacing: 0.237px; top: 646.1px;">Report</div>
<svg style="left:1173.4px;top:642.4px" width="15.6" height="15.6" viewBox="0 0 24 24"><path fill="#333" d="M18 21H7V8l7-7 1.250 1.250q.175.175.288.475.112.300.112.575v.350L14.550 8H21q.800 0 1.400.600.600.600.600 1.400v2q0 .175-.050.375t-.100.375l-3 7.050q-.225.500-.750.850T18 21Zm-9-2h9l3-7v-2h-9l1.350-5.500L9 8.850ZM9 8.850V19ZM7 8v2H4v9h3v2H2V8Z"></path></svg>
<svg style="left:1202.0px;top:643.7px" width="15.6" height="15.6" viewBox="0 0 24 24"><path fill="#333" d="M6 3h11v13l-7 7-1.250-1.250q-.175-.175-.287-.475Q8.350 20.975 8.350 20.700v-.350L9.450 16H3q-.800 0-1.400-.600Q1 14.800 1 14v-2q0-.175.050-.375t.100-.375l3-7.050q.225-.500.750-.850T6 3Zm9 2H6l-3 7v2h9l-1.350 5.500L15 15.150Zm0 10.150V5Zm2 .850v-2h3V5h-3V3h5v13Z"></path></svg>
<div class="a" style="left:1225.200px;top:238.700px;width:5.800px;height:430px;border-radius:3px;background:#d2d2d2"></div>
<div class="a" style="left:898px;top:685px;width:320px;height:90px;border:1px solid #d2d7e8;border-radius:13px;background:#fff"></div>
<div class="t" style="left: 912.3px; font-size: 12.8px; color: rgb(58, 58, 58); letter-spacing: 0.123px; top: 698.9px;">Describe your image</div>
<svg style="left:917.200px;top:732.200px" width="9.800" height="9.800" viewBox="0 0 9.800 9.800"><path d="M4.900 0V9.800M0 4.900H9.800" stroke="#9a9a9a" stroke-width="1.150" fill="none"></path></svg>
<div class="a" style="left:938px;top:724.100px;width:47.800px;height:25.800px;border-radius:12.900px;background:#edf1fa"></div>
<svg style="left:946px;top:730.500px" width="12.500" height="12.500" viewBox="0 0 12.500 12.500"><path d="M4.300 0.800c1.300-0.300 2.200 2.300 2.100 5.200L4.200 6.600C4 4.200 3.600 1.600 4.300 0.800z" fill="#f8df7c"></path><path d="M0.800 9.800C0.600 7.400 2.300 5.800 4.300 5.900 6 5.400 7.600 5.600 8.600 6.800 9.500 7.900 10.200 8.900 10 9.800 9.200 9.500 8.400 9.200 7.600 9.300 6.600 11 4.600 12.400 2.300 12.300 1.500 12 0.900 11 0.800 9.800z" fill="#f2a21f"></path><path d="M6.700 6.300C7.800 7 8.600 8.300 8.700 9.600 8.300 9.400 7.900 9.300 7.600 9.300 7.600 8.200 7.300 7.200 6.700 6.300z" fill="#f7cf6a"></path><circle cx="2.900" cy="8.700" r="0.900" fill="#fff3d0"></circle><circle cx="10" cy="2.400" r="1.900" fill="#f2b21f"></circle></svg>
<svg style="left:969px;top:735.600px" width="6.400" height="3.400" viewBox="0 0 10 5"><path fill="#2f33c6" d="M0 0h10L5 5z"></path></svg>
<div class="a" style="left:1148px;top:729px;width:28px;height:16px;border-radius:2.500px;background:#d4defb"></div>
<div class="t" style="left: 1152px; font-size: 9.3px; -webkit-text-stroke: 0.35px rgb(44, 54, 196); color: rgb(44, 54, 196); letter-spacing: 0.294px; top: 732.9px;">Beta</div>
<div class="a" style="left:1182px;top:723.900px;width:26px;height:26px;border-radius:50%;background:#e3e3e3"></div>
<svg style="left:1188.200px;top:730px" width="13.600" height="13.600" viewBox="0 0 24 24"><path d="M12 21V4M4.500 11.500L12 4l7.500 7.500" fill="none" stroke="#8a8a8a" stroke-width="2.300"></path></svg>

<!-- calendar -->
<svg style="left:1263px;top:54.400px" width="15.400" height="15.400" viewBox="0 0 15.400 15.400">
<rect x="0" y="0" width="15.400" height="15.400" rx="1.600" fill="#4f6bf0"></rect>
<path d="M12 0h1.800a1.600 1.600 0 0 1 1.600 1.600V12h-3.400z" fill="#f6b704"></path>
<path d="M0 12h12v3.400H1.600A1.600 1.600 0 0 1 0 13.800z" fill="#2ba24c"></path>
<path d="M12 12h3.400L12 15.400z" fill="#e94235"></path>
<rect x="3.200" y="3.200" width="8.800" height="8.800" fill="#fff"></rect>
<text x="7.600" y="10.400" font-family="Liberation Sans, sans-serif" font-weight="700" font-size="6.400" text-anchor="middle" fill="#6f86f3" letter-spacing="-0.300">31</text>
</svg>
<!-- keep -->
<svg style="left:1263.400px;top:98.800px" width="15.400" height="15.400" viewBox="0 0 15.400 15.400"><rect width="15.400" height="15.400" rx="1.800" fill="#f0bb2c"></rect><circle cx="7.700" cy="6.600" r="2.700" fill="#fff"></circle><rect x="6.300" y="8.600" width="2.800" height="1.500" fill="#fff"></rect><rect x="6.300" y="10.800" width="2.800" height="1" fill="#fff"></rect></svg>
<!-- tasks -->
<svg style="left:1264px;top:144.500px" width="14.500" height="14" viewBox="0 0 14.500 14"><circle cx="6.700" cy="7.400" r="5.500" fill="none" stroke="#3b55e6" stroke-width="2"></circle><path d="M4.300 7.300l2 2L13.300 2.300" fill="none" stroke="#3b55e6" stroke-width="2"></path><circle cx="12.800" cy="1.700" r="1.300" fill="#2a3cc0"></circle></svg>
<!-- contacts -->
<svg style="left:1265.200px;top:188.900px" width="12.200" height="13.400" viewBox="0 0 12.200 13.400"><circle cx="6.100" cy="3.200" r="3" fill="#2b35c8"></circle><path d="M0.200 12.400c0-3.500 2.200-5.400 5.900-5.400s5.900 1.900 5.900 5.400a1 1 0 0 1-1 1H1.200a1 1 0 0 1-1-1z" fill="#3a47dd"></path></svg>
<!-- maps -->
<svg style="left:1265.200px;top:234px" width="11.800" height="14.200" viewBox="0 0 11.800 14.200">
<path d="M5.900 0A5.900 5.900 0 0 1 11.800 5.900C11.800 9.400 7.800 11.600 5.900 14.200 4 11.600 0 9.400 0 5.900A5.900 5.900 0 0 1 5.900 0z" fill="#34a853"></path>
<path d="M5.900 0A5.900 5.900 0 0 1 11.300 3.500L5.900 5.900z" fill="#4285f4"></path>
<path d="M5.900 0A5.900 5.900 0 0 0 1.400 2.100L5.900 5.900z" fill="#ea4335"></path>
<path d="M1.400 2.100A5.900 5.900 0 0 0 0.300 8L5.900 5.900z" fill="#fbbc04"></path>
<path d="M11.300 3.500A5.900 5.900 0 0 1 11.200 8.500L5.900 5.900z" fill="#1a73e8" opacity=".75"></path>
<circle cx="5.900" cy="5.800" r="2.500" fill="#fff"></circle></svg>
<div class="a" style="left:1263px;top:276.300px;width:17px;height:1px;background:#cfcfcf"></div>
<svg style="left:1265.600px;top:307px" width="10.800" height="10.800" viewBox="0 0 10.800 10.800"><path d="M5.400 0V10.800M0 5.400H10.800" stroke="#222" stroke-width="1.350" fill="none"></path></svg>

</div>
</body></html>
